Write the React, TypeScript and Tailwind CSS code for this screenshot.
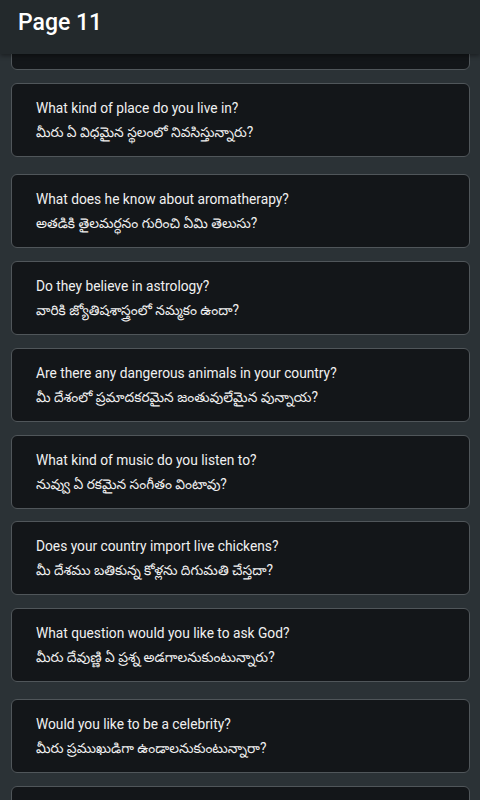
import React from "react";

type Phrase = {
  en: string;
  te: string;
  gap: string;
};

const phrases: Phrase[] = [
  { en: "What kind of place do you live in?", te: "మీరు ఏ విధమైన స్థలంలో నివసిస్తున్నారు?", gap: "mt-[13px]" },
  { en: "What does he know about aromatherapy?", te: "అతడికి తైలమర్ధనం గురించి ఏమి తెలుసు?", gap: "mt-[17px]" },
  { en: "Do they believe in astrology?", te: "వారికి జ్యోతిషశాస్త్రంలో నమ్మకం ఉందా?", gap: "mt-[13px]" },
  { en: "Are there any dangerous animals in your country?", te: "మీ దేశంలో ప్రమాదకరమైన జంతువులేమైన వున్నాయ?", gap: "mt-[13px]" },
  { en: "What kind of music do you listen to?", te: "నువ్వు ఏ రకమైన సంగీతం వింటావు?", gap: "mt-[13px]" },
  { en: "Does your country import live chickens?", te: "మీ దేశము బతికున్న కోళ్లను దిగుమతి చేస్తదా?", gap: "mt-[12px]" },
  { en: "What question would you like to ask God?", te: "మీరు దేవుణ్ణి ఏ ప్రశ్న అడగాలనుకుంటున్నారు?", gap: "mt-[13px]" },
  { en: "Would you like to be a celebrity?", te: "మీరు ప్రముఖుడిగా ఉండాలనుకుంటున్నారా?", gap: "mt-[17px]" },
  { en: "", te: "", gap: "mt-[13px]" },
];

export default function App() {
  return (
    <div
      className="relative h-[800px] w-[480px] overflow-hidden bg-[#2b3236]"
      style={{ fontFamily: "Roboto, 'Noto Sans', 'Noto Sans Telugu', sans-serif" }}
    >
      <header className="absolute inset-x-0 top-0 z-10 flex h-[54px] items-center bg-[#23292c] pl-[18px] shadow-[0_2px_4px_rgba(0,0,0,0.35)]">
        <h1 className="pb-[8px] text-[23px] font-medium text-white">Page 11</h1>
      </header>

      <div className="px-[11px] pr-[10px]">
        {/* card partly hidden under the header */}
        <div className="mt-[-4px] h-[74px] rounded-[6px] border border-[#50565a] bg-[#131619]" />
        {phrases.map((p, i) => (
          <div
            key={i}
            className={`${p.gap} flex h-[74px] flex-col justify-center rounded-[6px] border border-[#50565a] bg-[#131619] pl-[24px]`}
          >
            {p.en ? (
              <>
                <p className="text-[13.75px] leading-[24px] text-[#f0f0f0]">{p.en}</p>
                <p className="text-[13.75px] leading-[24px] text-[#f0f0f0]">{p.te}</p>
              </>
            ) : null}
          </div>
        ))}
      </div>
    </div>
  );
}
